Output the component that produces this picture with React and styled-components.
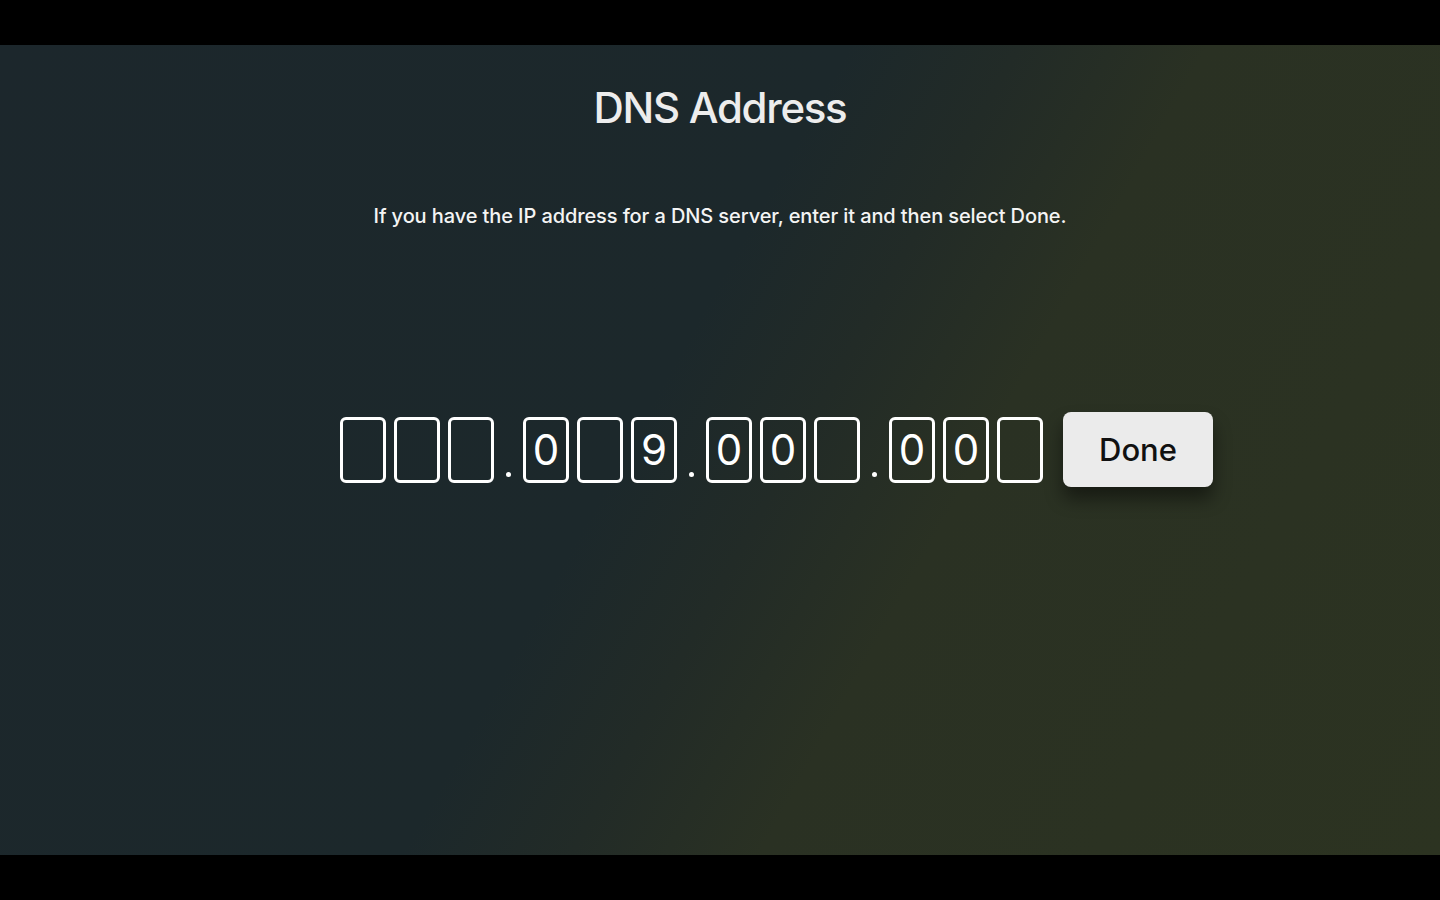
import styled, { createGlobalStyle } from 'styled-components';

const GlobalStyle = createGlobalStyle`
  html, body {
    margin: 0;
    padding: 0;
    background: #000;
  }
  body {
    font-family: Inter, "Noto Sans", "Liberation Sans", sans-serif;
  }
`;

const groups = [
  ['', '', ''],
  ['0', '', '9'],
  ['0', '0', ''],
  ['0', '0', ''],
];

function App() {
  return (
    <>
      <GlobalStyle />
      <Frame>
        <Screen>
          <Title>DNS Address</Title>
          <Subtitle>If you have the IP address for a DNS server, enter it and then select Done.</Subtitle>
          <Row>
            {groups.map((g, gi) => (
              <Segment key={gi}>
                {gi > 0 && (
                  <Separator>
                    <Dot />
                  </Separator>
                )}
                <Group>
                  {g.map((d, i) => (
                    <Cell key={i}>{d}</Cell>
                  ))}
                </Group>
              </Segment>
            ))}
            <DoneButton>Done</DoneButton>
          </Row>
        </Screen>
      </Frame>
    </>
  );
}

const Frame = styled.div`
  width: 100vw;
  height: 100vh;
  background: #000;
  padding: 45px 0;
  box-sizing: border-box;
  overflow: hidden;
`;

const Screen = styled.div`
  height: 810px;
  display: flex;
  flex-direction: column;
  align-items: center;
  background: linear-gradient(119deg, #1c272c 0%, #1c282b 45%, #222b27 54%, #2a3123 64%, #2c3321 100%);
`;

const Title = styled.h1`
  margin: 36px 0 0;
  font-size: 42px;
  line-height: 54px;
  font-weight: 500;
  color: #ededed;
  letter-spacing: -1.3px;
`;

const Subtitle = styled.p`
  margin: 69px 0 0;
  font-size: 20px;
  line-height: 24px;
  font-weight: 500;
  color: #f4f4f4;
  letter-spacing: -0.1px;
`;

const Row = styled.div`
  align-self: flex-start;
  margin: 184px 0 0 340px;
  display: flex;
  align-items: center;
`;

const Segment = styled.div`
  display: flex;
  align-items: center;
`;

const Group = styled.div`
  display: flex;
  gap: 8px;
`;

const Separator = styled.div`
  width: 29px;
  height: 65px;
  display: flex;
  align-items: flex-end;
  justify-content: center;
`;

const Dot = styled.span`
  width: 5px;
  height: 5px;
  border-radius: 50%;
  background: #fff;
  margin-bottom: 5px;
`;

const Cell = styled.div`
  width: 46px;
  height: 66px;
  box-sizing: border-box;
  border: 3px solid #fff;
  border-radius: 6px;
  display: flex;
  align-items: center;
  justify-content: center;
  color: #fff;
  font-size: 42px;
  font-weight: 400;
`;

const DoneButton = styled.button`
  margin-left: 20px;
  width: 150px;
  height: 75px;
  border: none;
  border-radius: 8px;
  background: #ebebeb;
  color: #111;
  font-family: inherit;
  font-size: 31px;
  font-weight: 500;
  box-shadow: 0 12px 18px rgba(0, 0, 0, 0.45);
  cursor: pointer;
`;

export default App;
